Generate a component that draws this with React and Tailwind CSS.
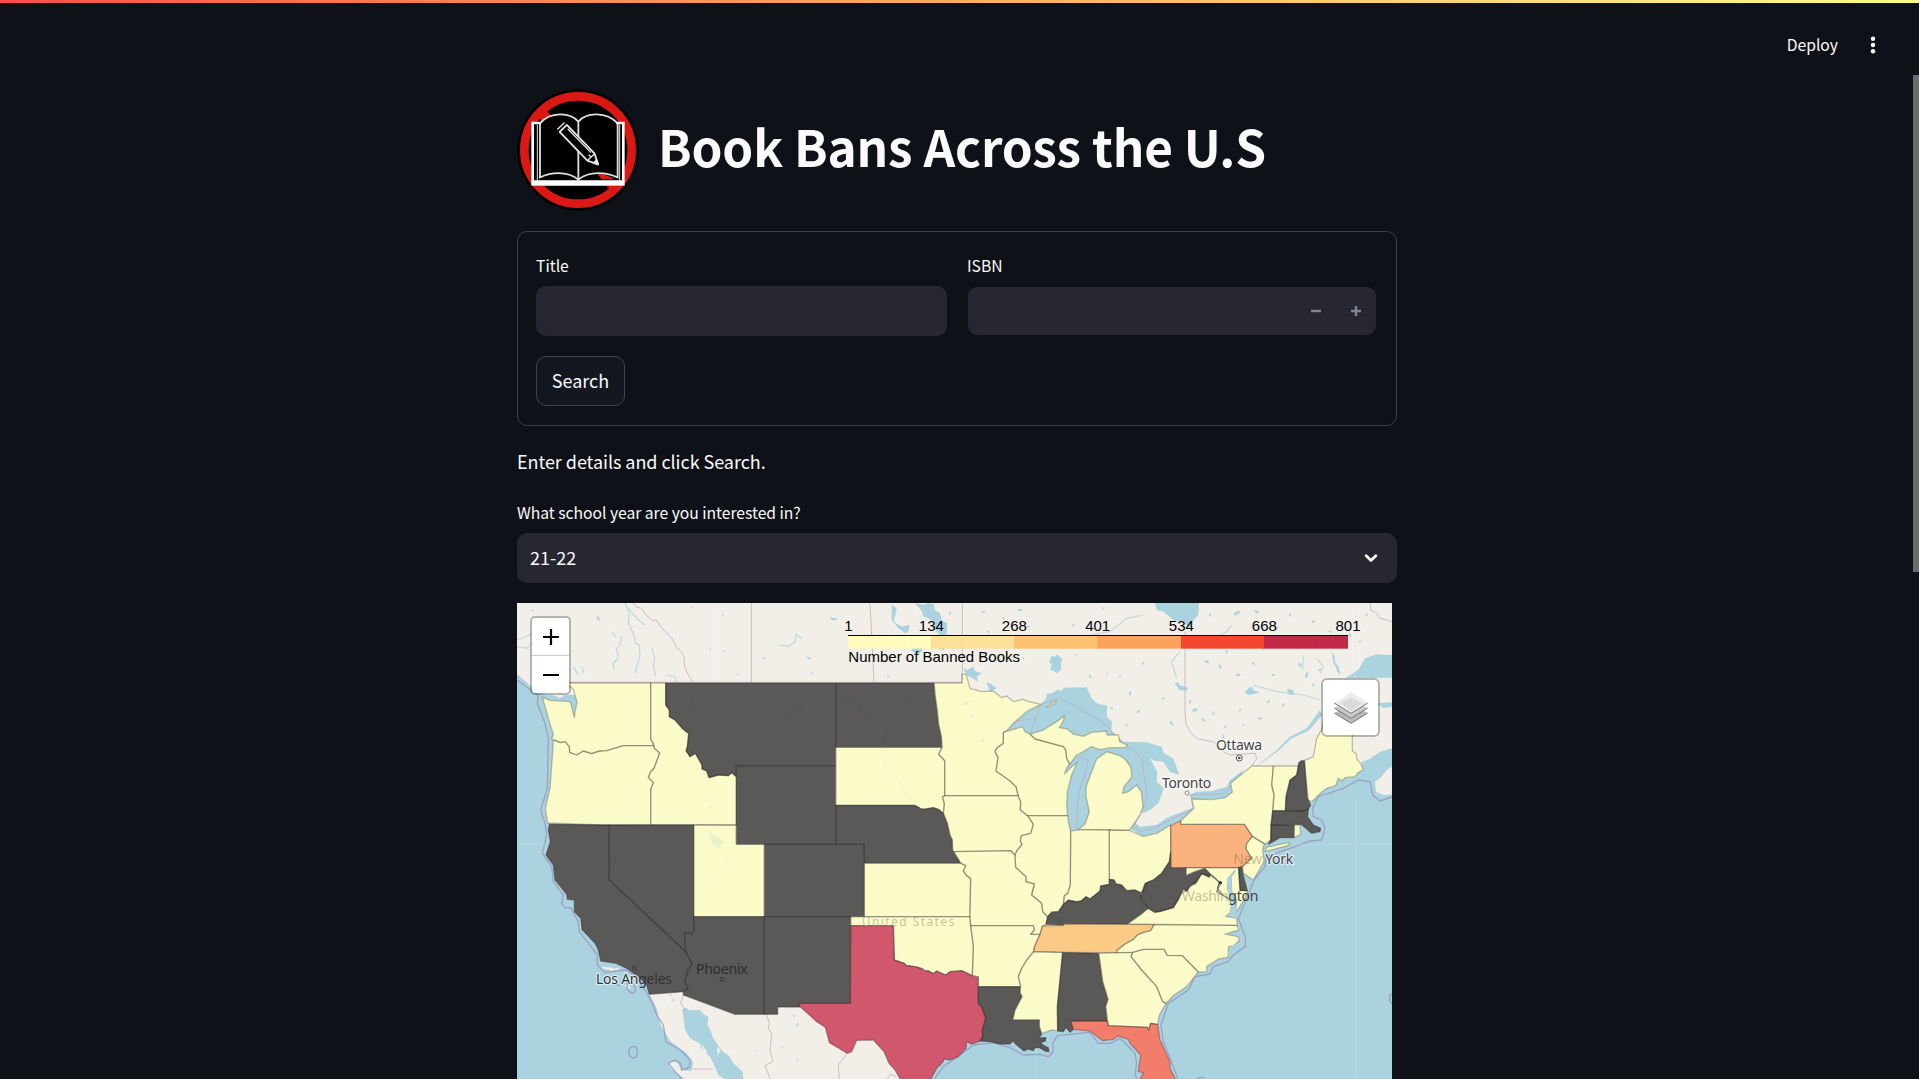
import React, { useState } from 'react';

// Map units: three per screen pixel
const fills = {
  low: '#fbfac9',
  none: '#5a5957',
  tn: '#fbcb86',
  pa: '#fcb27d',
  fl: '#f37d6b',
  tx: '#d1576d'
};

const states = [
  { id: 'WA', tone: 'low', points: '150,264 422,264 422,432 431,452 340,452 290,467 268,468 245,476 220,468 200,480 179,472 178,455 165,440 150,443 136,436 125,432 130,418 118,380 97,306 120,316 181,320 193,368 196,345 201,322 190,282 178,274' },
  { id: 'OR', tone: 'low', points: '130,439 136,436 150,443 165,440 178,455 179,472 200,480 220,468 245,476 268,468 290,467 340,452 431,452 433,460 449,474 432,520 422,530 415,547 430,563 422,583 422,688 270,690 113,684 106,640 120,580 128,470' },
  { id: 'ID', tone: 'low', points: '422,264 467,264 467,330 478,345 478,365 495,375 515,398 536,415 532,455 528,467 540,485 556,475 576,510 576,522 590,528 597,548 625,540 655,542 665,533 679,545 679,690 422,688 422,583 430,563 415,547 422,530 432,520 449,474 433,460 431,445 422,432' },
  { id: 'MT', tone: 'none', points: '467,264 977,264 977,512 679,512 679,545 665,533 655,542 625,540 597,548 590,528 576,522 576,510 556,475 540,485 528,467 532,455 536,415 525,408 515,398 495,375 478,365 478,345 467,330' },
  { id: 'ND', tone: 'none', points: '977,264 1272,264 1274,300 1282,345 1286,390 1294,425 1296,457 977,457' },
  { id: 'WY', tone: 'none', points: '679,512 977,512 977,748 679,748' },
  { id: 'SD', tone: 'low', points: '977,457 1296,457 1286,478 1304,497 1304,602 1297,606 1303,625 1300,655 1285,643 1270,638 1240,643 1213,631 977,631' },
  { id: 'NE', tone: 'none', points: '977,631 1213,631 1240,643 1270,638 1285,643 1300,655 1312,685 1320,720 1327,735 1328,765 1352,804 1063,804 1063,748 977,748' },
  { id: 'CO', tone: 'none', points: '763,748 1063,748 1063,965 763,965' },
  { id: 'UT', tone: 'low', points: '551,690 679,690 679,748 763,748 763,965 551,965' },
  { id: 'CA', tone: 'none', points: '118,688 298,690 298,855 527,1070 547,1108 530,1140 524,1160 534,1180 520,1190 418,1198 410,1170 385,1145 350,1120 318,1105 272,1098 265,1065 255,1045 215,1003 212,970 193,950 193,915 172,913 170,898 135,855 130,810 108,780 121,740 115,705' },
  { id: 'NV', tone: 'none', points: '298,690 551,690 551,1010 544,1018 538,1012 523,1014 527,1070 298,855' },
  { id: 'AZ', tone: 'none', points: '551,965 763,965 763,1258 675,1258 520,1200 520,1190 534,1180 524,1160 530,1140 532,1122 547,1108 527,1070 523,1014 538,1012 544,1018 551,1010' },
  { id: 'NM', tone: 'none', points: '763,965 1022,965 1021,1225 870,1225 869,1236 803,1236 803,1258 763,1258' },
  { id: 'KS', tone: 'low', points: '1063,805 1352,805 1367,812 1360,828 1370,842 1382,850 1379,965 1063,965' },
  { id: 'OK', tone: 'low', points: '1022,965 1379,965 1382,992 1390,1055 1387,1142 1355,1127 1320,1130 1307,1140 1280,1128 1270,1136 1238,1122 1220,1116 1188,1111 1183,1105 1153,1095 1150,992 1022,992' },
  { id: 'TX', tone: 'tx', points: '1022,992 1150,992 1153,1095 1183,1105 1188,1111 1220,1116 1238,1122 1243,1128 1255,1127 1270,1136 1280,1128 1307,1140 1320,1130 1355,1127 1387,1142 1405,1146 1405,1225 1416,1238 1427,1270 1417,1305 1418,1325 1411,1338 1385,1347 1370,1340 1368,1360 1345,1385 1320,1395 1302,1392 1298,1402 1280,1420 1258,1460 1175,1460 1155,1425 1137,1405 1122,1370 1090,1335 1040,1336 1025,1370 1012,1375 958,1343 946,1297 920,1280 868,1233 868,1225 1021,1225' },
  { id: 'MN', tone: 'low', points: '1272,264 1356,264 1356,238 1368,238 1380,280 1415,290 1450,288 1475,308 1490,303 1510,320 1540,313 1550,318 1592,328 1550,350 1510,385 1490,407 1480,412 1480,445 1460,460 1455,470 1464,488 1458,528 1500,558 1518,575 1525,602 1304,602 1304,497 1286,478 1296,457 1294,425 1286,390' },
  { id: 'IA', tone: 'low', points: '1304,602 1524,602 1532,620 1531,645 1553,662 1570,688 1562,715 1534,722 1531,738 1536,748 1520,768 1515,780 1502,767 1331,770 1328,765 1327,735 1320,720 1312,685 1300,655 1303,625 1297,606' },
  { id: 'WI', tone: 'low', points: '1480,412 1510,403 1538,395 1545,410 1560,417 1575,432 1660,455 1667,465 1670,490 1679,505 1670,520 1663,537 1685,515 1702,500 1685,540 1672,590 1670,630 1673,662 1553,662 1531,645 1532,620 1524,602 1518,575 1500,558 1458,528 1464,488 1455,470 1460,460 1480,445' },
  { id: 'UP', tone: 'low', points: '1560,417 1600,405 1640,380 1663,362 1660,378 1648,398 1672,402 1690,417 1720,424 1745,412 1788,408 1792,420 1825,420 1829,440 1852,450 1845,458 1800,458 1770,464 1745,455 1720,470 1700,480 1679,508 1670,490 1667,465 1660,455 1575,432' },
  { id: 'MI', tone: 'low', points: '1760,492 1790,470 1825,480 1845,492 1862,515 1866,545 1842,575 1838,595 1855,590 1880,570 1894,590 1899,635 1890,660 1858,706 1800,705 1704,704 1725,688 1738,650 1728,605 1728,575 1745,530' },
  { id: 'IL', tone: 'low', points: '1553,662 1673,662 1676,685 1682,708 1681,870 1673,895 1663,902 1660,930 1645,950 1625,950 1613,965 1598,950 1595,925 1565,900 1573,867 1548,860 1548,845 1517,817 1515,780 1520,768 1536,748 1531,738 1534,722 1562,715 1570,688' },
  { id: 'IN', tone: 'low', points: '1682,708 1710,704 1798,704 1798,868 1772,873 1770,888 1740,912 1728,905 1713,918 1700,920 1675,917 1660,928 1663,902 1673,895 1681,870' },
  { id: 'OH', tone: 'low', points: '1798,705 1858,706 1900,724 1940,715 1982,690 1982,770 1978,800 1955,835 1930,855 1915,860 1900,887 1892,893 1875,885 1850,887 1835,870 1818,867 1812,855 1798,853' },
  { id: 'MO', tone: 'low', points: '1331,770 1502,767 1515,780 1517,817 1548,845 1548,860 1573,867 1565,900 1595,925 1598,950 1613,965 1608,988 1597,995 1590,1018 1562,1018 1573,1005 1570,992 1382,992 1380,965 1382,850 1370,842 1360,828 1367,812 1352,804' },
  { id: 'AR', tone: 'low', points: '1382,992 1570,992 1573,1005 1562,1018 1590,1018 1573,1055 1571,1068 1550,1095 1535,1120 1525,1145 1532,1175 1405,1175 1405,1146 1387,1142 1390,1055' },
  { id: 'LA', tone: 'none', points: '1405,1175 1530,1175 1530,1193 1536,1205 1515,1245 1508,1275 1588,1275 1588,1295 1595,1317 1588,1328 1608,1328 1606,1338 1592,1343 1602,1352 1615,1358 1617,1370 1605,1368 1588,1358 1575,1358 1570,1367 1555,1362 1542,1368 1520,1350 1508,1338 1500,1347 1470,1347 1440,1340 1411,1338 1418,1325 1417,1305 1427,1270 1416,1238 1405,1225' },
  { id: 'MS', tone: 'low', points: '1572,1070 1658,1072 1642,1235 1643,1307 1625,1305 1595,1316 1588,1295 1588,1275 1508,1275 1515,1245 1536,1205 1530,1193 1532,1175 1525,1145 1535,1120 1550,1095' },
  { id: 'AL', tone: 'none', points: '1658,1072 1766,1075 1778,1160 1794,1213 1787,1235 1792,1278 1682,1278 1690,1303 1680,1312 1668,1298 1660,1310 1643,1308 1642,1235' },
  { id: 'KY', tone: 'none', points: '1608,988 1613,965 1625,952 1645,950 1660,928 1675,915 1700,920 1713,918 1728,905 1740,912 1770,888 1772,873 1798,868 1798,853 1812,855 1818,867 1835,870 1850,887 1875,885 1892,893 1895,915 1915,940 1890,960 1852,987 1662,987 1660,991' },
  { id: 'TN', tone: 'tn', points: '1597,993 1660,991 1662,986 1932,989 1922,1007 1900,1012 1882,1020 1870,1033 1845,1047 1820,1068 1820,1073 1658,1072 1571,1070 1573,1055 1590,1018' },
  { id: 'GA', tone: 'low', points: '1766,1075 1820,1073 1868,1072 1863,1085 1895,1125 1940,1175 1958,1220 1968,1225 1948,1260 1943,1288 1922,1285 1915,1305 1912,1297 1795,1292 1792,1278 1787,1235 1794,1213 1778,1160' },
  { id: 'FL', tone: 'fl', points: '1682,1278 1792,1278 1795,1292 1912,1297 1916,1305 1922,1285 1943,1288 1950,1335 1980,1400 1980,1420 2000,1460 1886,1460 1900,1433 1885,1430 1892,1380 1860,1345 1855,1333 1825,1323 1810,1333 1778,1337 1740,1308 1690,1303' },
  { id: 'SC', tone: 'low', points: '1868,1072 1900,1063 1962,1063 1972,1081 2017,1082 2065,1131 2030,1175 1990,1202 1968,1225 1958,1220 1940,1175 1895,1125 1863,1085' },
  { id: 'NC', tone: 'low', points: '1932,989 2180,991 2187,1005 2145,1017 2185,1025 2187,1037 2170,1053 2155,1055 2155,1087 2125,1092 2090,1115 2090,1130 2065,1131 2017,1082 1972,1081 1962,1063 1900,1063 1868,1072 1820,1073 1820,1065 1845,1047 1870,1033 1882,1020 1900,1012 1922,1007' },
  { id: 'VA', tone: 'low', points: '1852,987 1890,960 1915,940 1935,952 1990,938 2010,900 2030,885 2045,870 2075,835 2100,840 2132,865 2120,890 2155,910 2165,930 2160,955 2148,963 2180,970 2182,991' },
  { id: 'WV', tone: 'none', points: '1982,770 1983,818 2028,818 2028,842 2055,830 2085,820 2102,838 2098,847 2075,837 2058,865 2040,873 2030,890 2020,882 2005,915 1990,938 1950,950 1935,952 1915,940 1893,910 1895,893 1905,865 1930,855 1955,835 1978,800' },
  { id: 'MD', tone: 'low', points: '2028,818 2187,818 2190,885 2212,887 2205,910 2177,955 2180,915 2165,895 2163,845 2175,828 2155,850 2152,880 2165,915 2155,910 2120,890 2132,865 2120,855 2102,838 2085,820 2055,830 2028,842' },
  { id: 'DE', tone: 'none', points: '2185,818 2195,813 2198,835 2212,887 2190,887' },
  { id: 'PA', tone: 'pa', points: '1982,692 2012,677 2012,688 2203,688 2227,724 2210,745 2208,762 2225,790 2195,815 2185,818 1983,818' },
  { id: 'NJ', tone: 'low', points: '2227,724 2263,746 2258,765 2262,800 2230,855 2200,835 2198,815 2225,790 2208,762 2210,745' },
  { id: 'NY', tone: 'low', points: '2012,677 2052,640 2045,612 2105,614 2145,608 2167,592 2162,565 2180,550 2225,513 2290,513 2285,570 2292,600 2288,650 2283,690 2282,735 2265,748 2227,724 2203,688 2012,688' },
  { id: 'LI', tone: 'low', points: '2265,770 2270,757 2335,743 2340,750' },
  { id: 'VT', tone: 'low', points: '2290,513 2368,513 2360,540 2340,555 2328,605 2326,647 2288,647 2292,600 2285,570' },
  { id: 'ME', tone: 'low', points: '2383,497 2410,485 2420,430 2437,400 2440,375 2527,375 2527,468 2540,478 2540,492 2552,505 2560,525 2545,532 2535,545 2505,548 2495,558 2485,550 2478,570 2468,575 2450,580 2435,592 2405,620 2395,615 2390,570' },
  { id: 'NH', tone: 'none', points: '2366,503 2374,497 2383,497 2392,610 2402,630 2395,643 2380,648 2326,647 2328,605 2340,555 2360,540' },
  { id: 'MA', tone: 'none', points: '2288,647 2380,648 2395,642 2393,665 2410,690 2432,700 2430,710 2405,715 2373,688 2283,690' },
  { id: 'CT', tone: 'none', points: '2283,690 2353,690 2352,728 2310,728 2275,748 2282,735' },
  { id: 'RI', tone: 'low', points: '2353,690 2370,690 2372,718 2352,728' }
];

const water = [
  // Pacific
  'M21,238 L45,258 80,290 110,300 150,300 200,300 210,330 210,1000 420,1150 418,1198 440,1240 452,1290 480,1338 530,1375 550,1402 545,1428 515,1425 500,1402 480,1400 478,1415 500,1435 530,1456 21,1456Z',
  // Gulf of California
  'M517,1243 L525,1238 540,1246 570,1245 580,1258 595,1265 593,1290 603,1310 610,1330 632,1362 640,1372 655,1380 670,1405 698,1430 700,1456 650,1456 625,1440 608,1400 600,1385 575,1362 568,1345 540,1330 525,1305Z',
  // Atlantic and Gulf of Mexico
  'M1255,1456 L1300,1390 1345,1385 1380,1325 1600,1300 1800,1260 1940,1220 2050,1080 2130,960 2130,820 2200,790 2260,740 2350,700 2390,620 2450,570 2530,530 2560,505 2610,470 2646,460 2646,1456Z',
  // Superior
  'M1488,408 L1550,350 1592,328 1608,312 1610,298 1632,292 1640,284 1655,288 1662,278 1730,277 1745,310 1760,325 1792,333 1790,365 1806,380 1804,405 1840,440 1852,450 1800,440 1560,417Z',
  // Michigan
  'M1663,537 L1672,510 1700,480 1745,450 1870,452 1850,470 1760,500 1745,530 1730,575 1740,650 1725,688 1702,712 1680,705 1668,650 1670,590 1685,540Z',
  // Huron and Georgian Bay
  'M1770,458 L1850,440 1910,442 1955,455 1962,475 1990,490 2008,540 1980,530 1960,500 1935,498 1920,490 1942,530 1940,560 1962,580 1945,625 1920,645 1897,655 1885,620 1840,600 1820,500 1760,510Z',
  // Erie
  'M1858,700 L1872,680 1890,695 1940,690 1970,668 2045,640 2055,645 2010,690 1940,720 1900,726Z',
  // Ontario
  'M2035,600 L2060,590 2105,588 2150,575 2160,555 2200,525 2170,590 2145,610 2050,615Z',
  // St Lawrence
  'M2240,513 L2300,465 2340,425 2390,400 2430,345 2437,360 2395,408 2345,430 2305,467 2260,500Z',
  'M2505,250 L2545,225 2565,190 2600,178 2646,180 2646,248Z',
  // Fundy
  'M2555,500 L2590,490 2646,470 2646,480 2600,510 2560,560Z',
  'M2600,325 L2646,322 2646,335 2620,340Z',
  // Northern lakes
  'M1935,24 L2067,24 2065,60 2050,78 2040,100 2020,85 1990,75 1960,50 1940,45Z',
  'M1215,24 L1240,30 1255,24 1270,28 1275,45 1290,55 1295,75 1312,85 1310,110 1302,165 1285,162 1288,120 1270,98 1275,85 1255,70 1240,65 1235,48Z',
  'M1145,28 L1160,40 1152,80 1175,95 1198,90 1195,110 1185,115 1165,100 1145,75Z',
  'M1200,130 L1212,150 1225,148 1238,165 1225,180 1205,168Z',
  'M1625,182 L1635,185 1642,178 1652,188 1658,192 1652,205 1655,222 1640,235 1632,228 1620,225 1625,210 1618,200Z',
  'M1360,215 L1370,225 1378,222 1390,215 1395,228 1415,235 1400,245 1405,260 1385,248 1368,240Z',
  'M1430,262 L1445,268 1460,280 1440,290Z',
  'M2330,282 L2350,285 2352,298 2338,300Z',
  'M1995,265 L2005,262 2010,272 2028,275 2035,285 2010,287Z',
  'M2203,293 L2215,280 2225,275 2230,285 2248,292 2235,296 2220,300Z',
  'M960,65 L970,70 983,68 975,76 965,76Z',
  'M886,184 L902,188 900,196Z',
  'M2415,120 L2425,140 2422,165 2412,150Z',
  'M2465,170 L2475,185 2474,200 2486,215 2492,240 2480,228 2478,215 2470,205Z'
];

// [x, y, length] of the small lakes north of the border
const ponds = [
  [68, 46, 8], [265, 70, 14], [118, 140, 18], [600, 162, 6], [642, 168, 7], [683, 238, 8], [762, 190, 10], [545, 36, 8], [638, 60, 6],
  [905, 235, 8], [1135, 245, 8], [1110, 120, 8], [1320, 55, 10], [1420, 50, 12], [1435, 110, 10], [1480, 70, 9], [1500, 130, 12], [1530, 45, 14],
  [1555, 95, 9], [1590, 150, 12], [1540, 190, 8], [1470, 200, 9], [1420, 175, 9], [1690, 90, 10], [1700, 180, 8], [1740, 245, 12], [1780, 40, 8],
  [1790, 235, 6], [1805, 340, 10], [1860, 295, 14], [1885, 350, 12], [1850, 390, 10], [1830, 245, 8], [1900, 205, 10], [1960, 310, 10], [1985, 385, 16],
  [2040, 320, 12], [2055, 345, 18], [2080, 375, 14], [2110, 355, 12], [2145, 395, 10], [2090, 200, 16], [2130, 215, 14], [2150, 170, 12],
  [2185, 240, 14], [2230, 205, 12], [2260, 160, 10], [2180, 55, 22], [2240, 50, 16], [2300, 100, 12], [2340, 60, 10], [2290, 240, 10],
  [2370, 210, 16], [2390, 240, 18], [2430, 225, 12], [2410, 270, 12], [2320, 330, 10], [2275, 320, 12], [2250, 370, 14], [2200, 390, 8],
  [2100, 60, 10], [2410, 80, 12], [2520, 120, 12], [2550, 140, 8], [2570, 60, 10], [2460, 110, 10], [2140, 425, 12], [2190, 345, 10],
  [1895, 465, 20], [1940, 470, 16], [482, 1200, 8], [488, 1215, 8], [852, 1262, 8], [862, 1290, 10], [816, 1357, 6], [740, 1366, 6], [862, 1395, 6]
];

const creeks = [
  'M312,225 L310,205 320,195 325,180 318,165 330,150 335,125',
  'M375,235 L380,215 390,180 388,150 376,145 372,120 355,85 358,55 345,24',
  'M438,245 L430,215 434,190 426,160',
  'M305,110 L318,125 M190,215 L205,240 M215,215 L222,235',
  'M21,155 L50,160 65,145 M21,135 L60,120 85,95',
  'M355,40 L380,70 405,90',
  'M805,150 L835,155 855,140 858,118 875,130',
  'M470,240 L495,245 505,285',
  'M2110,130 L2150,110 2165,90 M2000,250 L1985,200 2010,170',
  'M2230,270 L2300,290 2380,300 2430,315',
  'M1740,120 L1800,110 1850,70 1900,60',
  'M2420,190 L2440,215 2430,235 M2380,180 L2378,225'
];

const borders = [
  'M370,24 L378,35 395,40 410,62 430,78 438,74 455,98 485,130 500,158 512,168 522,185 524,215 535,240 550,262',
  'M724,24 V262 M1080,24 L1092,262 M1357,24 V238',
  'M2025,110 V355 L2028,390 2045,415 2062,432 2110,440 2140,470 2160,480 2235,475 2240,490 2225,513',
  'M1592,328 L1648,308 1760,370 1795,395 1810,418 1830,435 1895,490 1905,560 1912,605 1895,650 1870,695 1890,710 1930,700 1990,670 2048,642 2045,600 2145,595 2165,570',
  'M1490,407 L1520,378 1580,370 M1592,328 L1562,412 M1700,700 L1705,600 1730,520 1735,495 1700,485',
  'M2580,24 L2583,45 2600,55 2610,70 2646,80',
  'M770,1260 L778,1285 775,1300 785,1315 780,1365 788,1400 765,1412 782,1456',
  'M1012,1375 L985,1410 988,1456 M548,1422 H608 M520,1200 L512,1225 525,1243',
  'M1130,1456 L1140,1438 1160,1445'
];

const seaLine = [
  'M21,255 L55,280 85,302 82,325 105,385 115,430 112,580 92,645 105,685 110,720 97,775 125,815 130,860 160,900 155,925 165,938 182,938 205,980 208,1010 240,1050 262,1080 262,1110 285,1132 320,1128 350,1125 380,1150 405,1185 425,1220 440,1260 460,1290 468,1340 515,1368 540,1395 538,1418 515,1425 512,1405 495,1395 475,1405 500,1435 520,1456',
  'M1270,1456 L1300,1415 1350,1380 1390,1350 1450,1343 1500,1358 1540,1380 1590,1378 1615,1385 1630,1370 1628,1345 1642,1322 1740,1312 1765,1345 1800,1345 1830,1330 1850,1350 1875,1375 1880,1405 1875,1440 1885,1456',
  'M2005,1456 L1990,1415 1960,1340 1953,1290 1975,1225 2035,1185 2055,1145 2100,1137 2110,1115 2155,1100 2170,1080 2205,1055 2207,1030 2185,970 2215,900 2232,855 2265,815 2268,785 2340,760 2400,738 2435,735 2445,700 2435,675 2410,665 2408,640 2425,605 2500,580 2545,555 2580,560 2588,600 2610,618 2646,605',
  'M370,1354 C385,1352 388,1385 370,1389 C352,1388 352,1356 370,1354Z',
  'M350,1165 C365,1150 380,1175 375,1190 C360,1200 350,1185 350,1165Z M310,1165 L330,1172',
  'M2646,1195 C2636,1200 2636,1220 2646,1225 M2060,1452 C2068,1446 2078,1446 2086,1452'
];

const legend = [
  { x: 1014, width: 250, color: '#fefbb9', tick: '1' },
  { x: 1263, width: 250, color: '#fcdf94', tick: '134' },
  { x: 1512, width: 251, color: '#fdbf6c', tick: '268' },
  { x: 1762, width: 251, color: '#fd9d56', tick: '401' },
  { x: 2013, width: 249, color: '#f23f28', tick: '534' },
  { x: 2262, width: 252, color: '#c11f40', tick: '668' }
];

function UsMap() {
  return (
    <svg className="block w-[875px] h-[476px]" viewBox="21 24 2625 1428">
      <rect x="21" y="24" width="2625" height="1428" fill="#f2efe9" />

      {water.map((d) => (
        <path key={d} d={d} fill="#aad3df" />
      ))}
      <path d="M2595,560 L2615,545 2630,525 2646,515 V598 L2620,600 2598,590Z M115,296 L150,300 165,302 150,308Z M622,1355 L632,1365 622,1382Z M572,1345 L592,1370 585,1380Z" fill="#f2efe9" />
      <path d="M275,1118 L310,1122 M300,1128 L325,1120 M345,1170 L360,1180" stroke="#f2efe9" strokeWidth="6" />

      {ponds.map(([x, y, size], i) => (
        <ellipse
          key={`${x}-${y}`}
          cx={x}
          cy={y}
          rx={size / 2}
          ry={size / 5 + 0.8}
          transform={`rotate(${(i * 53) % 180} ${x} ${y})`}
          fill="#aad3df"
          opacity="0.9"
        />
      ))}
      {creeks.map((d) => (
        <path key={d} d={d} fill="none" stroke="#aad3df" strokeWidth="3.5" opacity="0.75" />
      ))}
      <g fill="none" stroke="#c3a9c4" strokeWidth="3" opacity="0.75">
        {borders.map((d) => (
          <path key={d} d={d} />
        ))}
      </g>
      <g fill="none" stroke="#9a95bd" strokeWidth="4" opacity="0.8" strokeLinejoin="round">
        {seaLine.map((d) => (
          <path key={d} d={d} />
        ))}
      </g>
      <path d="M21,748 H105 M2537,24 V250 M2537,600 V1452 M2310,748 H2646 M1578,1370 V1452 M616,24 V262" fill="none" stroke="#dcebe3" strokeWidth="2" opacity="0.4" />

      <g fontFamily='"Noto Sans", sans-serif' fontSize="42" fill="#444" stroke="#fff" strokeOpacity="0.6" strokeWidth="8" paintOrder="stroke" strokeLinejoin="round">
        <text x="2118" y="466" textLength="138">Ottawa</text>
        <text x="1956" y="579" textLength="148">Toronto</text>
      </g>
      <circle cx="2188" cy="489" r="9" fill="#fff" stroke="#555" strokeWidth="3" />
      <circle cx="2188" cy="489" r="4" fill="#444" />
      <circle cx="2031" cy="594" r="6" fill="#fff" stroke="#777" strokeWidth="2.5" />

      {states.map((state) => (
        <polygon key={state.id} points={state.points} fill={fills[state.tone]} stroke={fills[state.tone]} strokeWidth="1" />
      ))}
      <g fill="none" stroke="#1c1c1c" strokeOpacity="0.27" strokeWidth="4" strokeLinejoin="round">
        {states.map((state) => (
          <polygon key={state.id} points={state.points} />
        ))}
      </g>
      <path d="M150,262 H1356 V238" fill="none" stroke="#957f8f" strokeWidth="3" opacity="0.6" />

      {/* Terrain and labels that show through the shading */}
      <g fill="#e2f0c9" opacity="0.8">
        <path d="M597,705 L612,722 628,728 640,742 625,762 605,745Z M645,780 l6,8 -6,10z M586,858 l8,2 -6,6z M1355,330 l25,-16 -8,16z M1380,355 l15,5 -12,8z M1415,430 l12,8 -10,6z M600,630 l10,8 -8,2z" />
      </g>
      <path d="M1125,480 L1128,520 1150,548 1172,560 1178,590 1205,615 1235,640" fill="none" stroke="#f2f6cd" strokeWidth="4" />
      <path d="M545,320 l5,25 M815,358 L850,350 875,330 M1000,322 L1045,325 1060,350 1095,356 M1185,320 l18,5 M312,792 l6,18 M303,1014 h12 M197,910 l4,22 M703,545 l8,8 M1128,410 L1125,450" fill="none" stroke="#4c5a5b" strokeWidth="4" opacity="0.7" />
      <path d="M2155,895 L2152,850 2175,824 2162,850 2166,895 2180,955 2172,968 2160,950 2168,925Z M2140,965 L2165,968 2180,970 M2142,1018 L2185,1012 M2155,1080 L2160,1058 2185,1045 2175,1065Z" fill="#aad3df" stroke="#aad3df" strokeWidth="2" />
      <path d="M1608,336 L1640,316 1636,325 1614,337Z" fill="#fbfac9" stroke="#8c8c70" strokeWidth="2" />
      <path d="M2100,838 L2115,848 2128,862 2122,880 2135,895" fill="none" stroke="#555" strokeWidth="3" />
      <circle cx="2131" cy="863" r="5" fill="#333" />

      <g fontFamily='"Noto Sans", sans-serif' fontSize="42" paintOrder="stroke" strokeWidth="7" strokeLinejoin="round">
        <text x="558" y="1137" textLength="155" fill="#2d2d2c">Phoenix</text>
        <text x="1055" y="992" textLength="278" fontSize="36" fill="#b5a98c" fillOpacity="0.7">United States</text>
        <text x="258" y="1167" textLength="228" fill="#333">
          <tspan stroke="#fff" strokeOpacity="0.6">Los An</tspan><tspan>geles</tspan>
        </text>
        <text x="2170" y="807" textLength="180">
          <tspan fill="#5b5040" fillOpacity="0.35">New </tspan><tspan fill="#444" stroke="#fff" strokeOpacity="0.6">York</tspan>
        </text>
        <text x="2015" y="918" textLength="230">
          <tspan fill="#5b5040" fillOpacity="0.35">Washin</tspan><tspan fill="#444">gton</tspan>
        </text>
      </g>
      <circle cx="373" cy="1119" r="6" fill="none" stroke="#333" strokeWidth="2.5" />
      <circle cx="636" cy="1153" r="6" fill="none" stroke="#333" strokeWidth="2.5" />

      {/* Color scale */}
      <g fontFamily='"Liberation Sans", Arial, sans-serif' fontSize="45" fill="#000">
        {legend.map((step) => (
          <g key={step.tick}>
            <rect x={step.x} y="123" width={step.width} height="38" fill={step.color} fillOpacity="0.96" />
            <text x={step.x + 1} y="108" textAnchor="middle">{step.tick}</text>
          </g>
        ))}
        <text x="2514" y="108" textAnchor="middle">801</text>
        <path d="M1014,121.5 H2514" stroke="#000" strokeWidth="3" />
        <text x="1015" y="201" textLength="515">Number of Banned Books</text>
      </g>
    </svg>
  );
}

function Logo() {
  return (
    <svg className="w-[122px] h-[122px] shrink-0" viewBox="21 27 366 366">
      <circle cx="204" cy="210" r="182" fill="#000" />
      <circle cx="204" cy="210" r="161" fill="none" stroke="#dc1815" strokeWidth="26" />
      <path d="M88,94 L320,326" stroke="#dc1815" strokeWidth="32" />
      <path d="M66,128 H90 C120,95 180,95 205,125 C230,95 290,95 321,128 H343 V318 H66Z" fill="#000" />
      <path d="M262,282 L282,283 315,298 H275Z" fill="#dc1815" />
      <g fill="none" stroke="#dedede" strokeWidth="5.5">
        <path d="M90,292 V130 C120,95 180,95 205,125 C230,95 290,95 323,130 V292 C290,278 240,270 205,299 C170,270 120,278 90,292Z M205,125 V299" />
        <path d="M82,134 V302 M329,134 V302" strokeWidth="3" />
      </g>
      <path d="M92,129 H68 V305 M318,129 H340 V305" fill="none" stroke="#fff" strokeWidth="8" />
      <path d="M64,301 H344 V317 H64Z" fill="#fff" />
      <g transform="translate(150 135) rotate(46)" fill="#000" stroke="#e6e6e6" strokeWidth="5.5" strokeLinejoin="round">
        <path d="M14,-15 H134 L164,0 134,15 H14Z" />
        <path d="M4,-15 V15 M134,-15 V15 M24,-9 H124 M134,0 H124" fill="none" strokeWidth="4" />
        <path d="M152,-6 L164,0 152,6Z" fill="#fff" />
      </g>
    </svg>
  );
}

function LayersIcon() {
  return (
    <svg className="w-[34px] h-[34px]" viewBox="0 0 102 102">
      <path d="M1,66 L51,97 101,66 51,40Z" fill="#b9b9b9" />
      <path d="M1,66 L51,97 101,66" fill="none" stroke="#777" strokeWidth="3" />
      <path d="M1,51 L51,82 101,51 51,25Z" fill="#c9c9c9" />
      <path d="M1,51 L51,82 101,51" fill="none" stroke="#777" strokeWidth="3" />
      <path d="M1,36 L51,67 101,36 51,4Z" fill="#ececec" />
      <path d="M18,36 L51,20 84,36 51,60Z" fill="#dadada" />
      <path d="M1,36 L51,67 101,36" fill="none" stroke="#777" strokeWidth="3" />
    </svg>
  );
}

function App() {
  const [title, setTitle] = useState('');
  const [isbn, setIsbn] = useState('');

  return (
    <div className="relative h-[1079px] overflow-hidden bg-[#0e1117] text-[#fafafa] font-['Noto_Sans_CJK_SC','Noto_Sans_CJK_JP',sans-serif]">
      <div className="h-[3px] bg-linear-to-r from-[#ff4b4b] to-[#fffd80]"></div>

      {/* Toolbar */}
      <header className="h-[72px] flex items-center justify-end pr-[43px]">
        <button className="text-[15.7px] leading-6 mt-[11px]">Deploy</button>
        <svg className="ml-[32px] mt-[12px] w-[6px] h-[18px]" viewBox="0 0 6 18" fill="#fafafa">
          <circle cx="3" cy="2.7" r="2.2" />
          <circle cx="3" cy="9" r="2.2" />
          <circle cx="3" cy="15.3" r="2.2" />
        </svg>
      </header>

      <main className="w-[880px] ml-[517px]">
        <div className="flex items-center mt-[14px] h-[122px]">
          <Logo />
          <h1 className="ml-[19px] mb-[9px] text-[49.5px] leading-[60px] font-bold tracking-[-0.18px] whitespace-nowrap">Book Bans Across the U.S</h1>
        </div>

        {/* Search form */}
        <form className="mt-[20px] h-[195px] border border-[#3d3f45] rounded-[10px] px-[18px] pt-[22px]">
          <div className="flex gap-[20px]">
            <label className="w-[411px] flex flex-col">
              <span className="text-[15.7px] leading-6">Title</span>
              <input
                className="mt-[8px] h-[50px] rounded-[10px] bg-[#262730] px-3 outline-none"
                value={title}
                onChange={(e) => setTitle(e.target.value)}
              />
            </label>
            <label className="w-[411px] flex flex-col">
              <span className="text-[15.7px] leading-6">ISBN</span>
              <span className="mt-[9px] ml-px w-[408px] h-[48px] rounded-[9px] bg-[#262730] flex items-center">
                <input
                  className="flex-1 min-w-0 h-full px-3 outline-none bg-transparent"
                  value={isbn}
                  onChange={(e) => setIsbn(e.target.value)}
                />
                <svg className="w-[10px] h-[10px] mr-[30px]" viewBox="0 0 10 10">
                  <path d="M0,5 H10" stroke="#808495" strokeWidth="2.4" />
                </svg>
                <svg className="w-[10px] h-[10px] mr-[15px]" viewBox="0 0 10 10">
                  <path d="M0,5 H10 M5,0 V10" stroke="#808495" strokeWidth="2.4" />
                </svg>
              </span>
            </label>
          </div>
          <button type="button" className="mt-[20px] w-[89px] h-[50px] rounded-[10px] border border-[#41434a] bg-[#131720] text-[18px] leading-[30px] pb-[2px]">
            Search
          </button>
        </form>

        <p className="mt-[20px] text-[18px] leading-[30px] tracking-[-0.05px]">Enter details and click Search.</p>

        <div className="mt-[25px] text-[15.7px] leading-6 tracking-[-0.02px]">What school year are you interested in?</div>
        <div className="mt-[8px] h-[50px] rounded-[10px] bg-[#262730] flex items-center justify-between pl-[13px] pr-[19px]">
          <span className="text-[18px] leading-[30px] pb-[2px]">21-22</span>
          <svg className="w-[14px] h-[9px]" viewBox="0 0 14 9" fill="none" stroke="#fafafa" strokeWidth="2.8">
            <path d="M2.2,1.8 L7,6.6 11.8,1.8" strokeLinecap="round" strokeLinejoin="round" />
          </svg>
        </div>

        {/* Map */}
        <div className="relative mt-[20px] w-[875px] h-[476px] overflow-hidden">
          <UsMap />
          <div className="absolute left-[13px] top-[13px] w-[41px] rounded-[5px] border-2 border-black/25 bg-clip-padding bg-white">
            <button className="h-[38px] w-full flex items-center justify-center border-b border-[#ccc]">
              <svg className="w-[16px] h-[16px]" viewBox="0 0 16 16" stroke="#000" strokeWidth="2.2">
                <path d="M0,8 H16 M8,0 V16" />
              </svg>
            </button>
            <button className="h-[37px] w-full flex items-center justify-center">
              <svg className="w-[16px] h-[16px]" viewBox="0 0 16 16" stroke="#000" strokeWidth="2">
                <path d="M0,8 H16" />
              </svg>
            </button>
          </div>
          <div className="absolute left-[804px] top-[75px] w-[59px] h-[59px] rounded-[6px] border-2 border-black/25 bg-clip-padding bg-white flex items-center justify-center">
            <LayersIcon />
          </div>
        </div>
      </main>

      {/* Scrollbar */}
      <div className="absolute right-0 top-[75px] w-[6px] h-[497px] bg-[#6b6b6e]"></div>
    </div>
  );
}

export default App;
